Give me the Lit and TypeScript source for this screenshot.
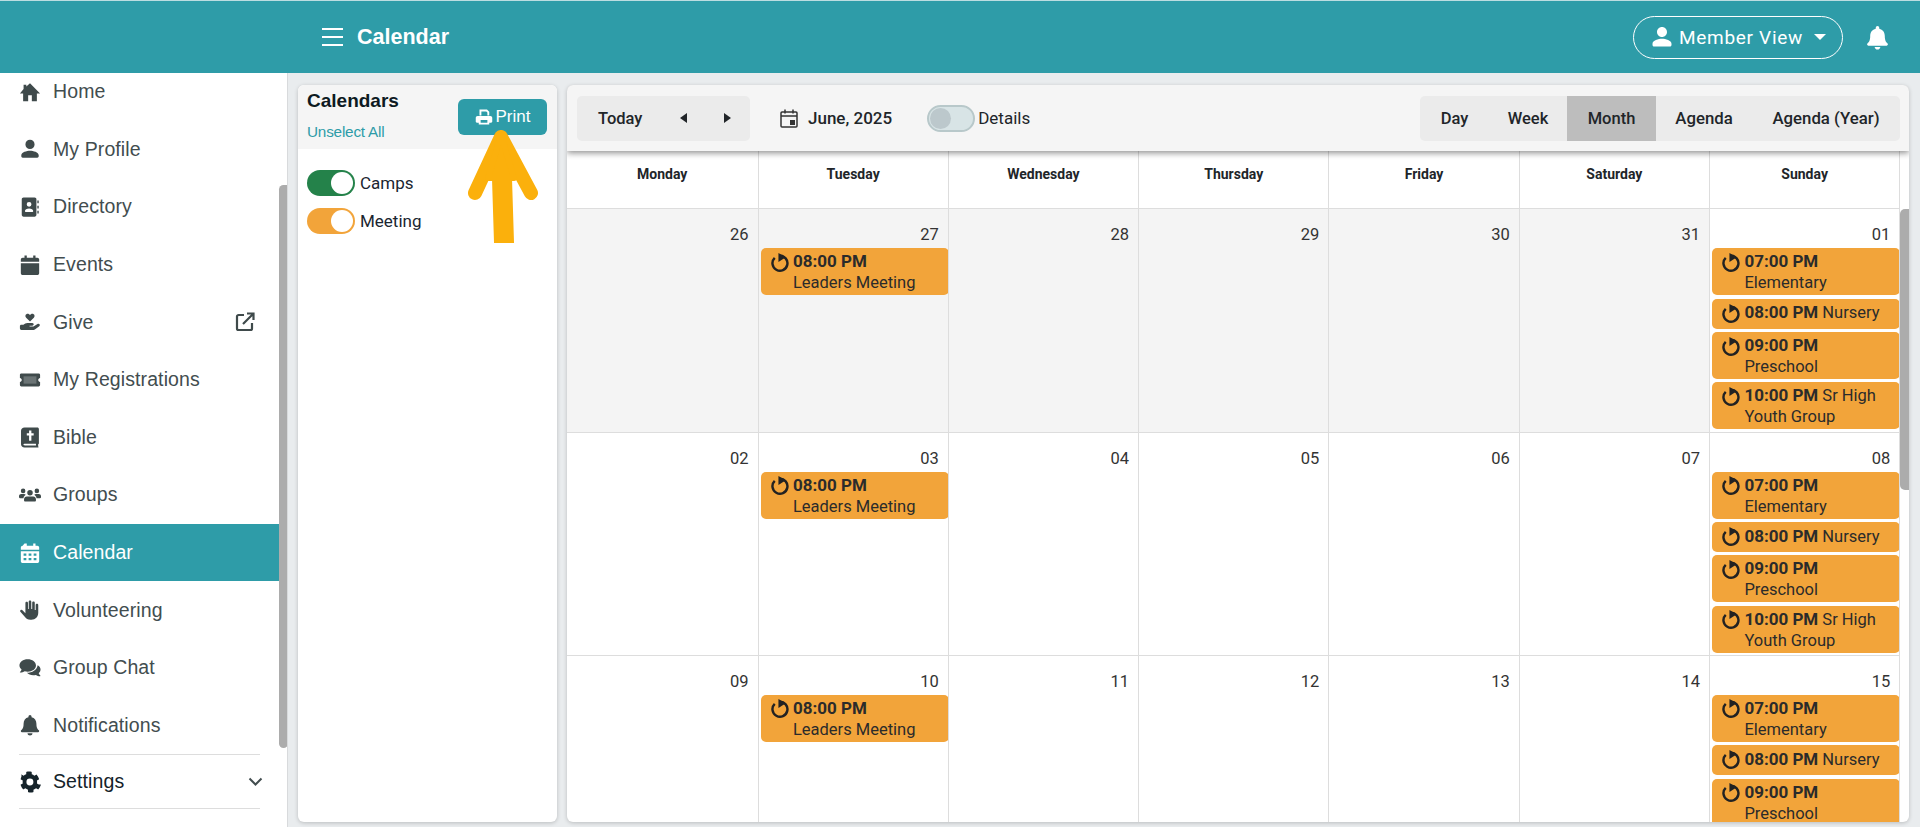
import { LitElement, html, css, svg } from "lit";
import { customElement } from "lit/decorators.js";

const ic = (vb: string, d: string, cls = "ni") => html`<svg class=${cls} viewBox=${vb} fill="currentColor">${svg`<path d=${d}></path>`}</svg>`;

const I: Record<string, any> = {
  home: ic("0 0 24 24", "M10 22v-6.500h4V22h5.500v-8.500H23L12 2.500 8 6V4H5v4.700L1 13.500h3.500V22z"),
  user: ic("0 0 24 24", "M12 12c2.800 0 5-2.200 5-5s-2.200-5-5-5-5 2.200-5 5 2.200 5 5 5zm0 1.800c-3.500 0-9.500 1.600-9.500 5v1.200c0 .8.700 1.500 1.500 1.500h16c.8 0 1.500-.7 1.500-1.500v-1.200c0-3.400-6-5-9.500-5z"),
  dir: ic("0 0 24 24", "M5 1.500h12c1.300 0 2 .9 2 2v17c0 1.200-.8 2-2 2H5c-1.200 0-2-.8-2-2v-17c0-1.200.8-2 2-2zm6 5a2.600 2.600 0 100 5.200A2.600 2.600 0 0011 6.500zm-4.500 9.800c0 .7.500 1.200 1 1.200h7c.6 0 1-.5 1-1.200 0-1.800-2-2.800-4.500-2.800s-4.500 1-4.500 2.800zM20 5h1.500v3H20zM20 10.500h1.500v3H20zM20 16h1.500v3H20z"),
  events: ic("0 0 24 24", "M6 1.500h2.500V4h7V1.500H18V4h2c1 0 2 .8 2 2v2.500H2V6c0-1.200 1-2 2-2h2zM2 10h20v11c0 1.200-1 2-2 2H4c-1 0-2-.8-2-2z"),
  give: ic("0 0 24 24", "M12 11.500L7.800 7.300C6.200 5.500 7.300 3 9.500 3c1 0 2 .6 2.500 1.500C12.500 3.600 13.500 3 14.500 3c2.200 0 3.300 2.500 1.700 4.300zM1 16.500c0-.8.700-1.500 1.500-1.500h2.300l2-1.300c.7-.5 1.600-.7 2.400-.7h5.300c1 0 1.700.8 1.500 1.800-.1.700-.8 1.200-1.500 1.200h-3v1h4.300l4.400-2.900c.7-.5 1.700-.4 2.200.3.500.7.400 1.600-.3 2.100l-4.800 3.700c-.4.300-.8.400-1.300.4H2.500c-.8 0-1.500-.7-1.500-1.500z"),
  ticket: html`<svg class="ni" viewBox="0 0 24 24" fill="currentColor">${svg`<path d="M1 6.500C1 5.700 1.700 5 2.500 5h19c.8 0 1.500.7 1.500 1.500v3.200c-1.200.3-2 1.100-2 2.300s.8 2 2 2.300v3.200c0 .8-.7 1.500-1.500 1.500h-19C1.700 19 1 18.300 1 17.500v-3.200c1.200-.3 2-1.100 2-2.300s-.8-2-2-2.300z"></path><rect x="5" y="8" width="14" height="8" fill="#6b7475"></rect>`}</svg>`,
  bible: ic("0 0 24 24", "M6 1.500h14c1 0 1.700.7 1.700 1.700v15.600c0 .6-.3 1-.8 1.200v2.300h.3v1.200H6c-2.200 0-3.800-1.500-3.800-3.600V5.200C2.200 3 3.800 1.500 6 1.500zM11 5v3H8.500v2.300H11V16h2.500v-5.700H16V8h-2.500V5zM6.500 19.300c-1 0-1.700.5-1.700 1s.7 1 1.700 1h12v-2z"),
  groups: ic("0 0 24 24", "M12 6.500a3 3 0 110 6 3 3 0 010-6zM4.500 5a2.500 2.500 0 110 5 2.500 2.500 0 010-5zm15 0a2.500 2.500 0 110 5 2.500 2.500 0 010-5zM7.300 11.800C6 12.600 5.100 13.900 4.900 15.500H1c-.5 0-1-.5-1-1v-1.200C0 11.900 1.200 11 2.500 11h3c.7 0 1.300.3 1.800.8zm9.400 0c.5-.5 1.100-.8 1.800-.8h3c1.300 0 2.500.9 2.500 2.300v1.200c0 .5-.5 1-1 1h-3.900c-.2-1.600-1.100-2.900-2.400-3.700zM8.500 13.500h7c1.700 0 3 1.300 3 3V18c0 .6-.4 1-1 1h-11c-.6 0-1-.4-1-1v-1.500c0-1.700 1.300-3 3-3z"),
  cal: ic("0 0 24 24", "M6 1.500h2.500V4h7V1.500H18V4h2c1 0 2 .8 2 2v2.500H2V6c0-1.200 1-2 2-2zM2 10h20v11c0 1.200-1 2-2 2H4c-1 0-2-.8-2-2zm3 2.500v2.500h3v-2.500zm5.500 0v2.500h3v-2.500zm5.500 0v2.500h3v-2.500zM5 17.500V20h3v-2.500zm5.500 0V20h3v-2.500zm5.500 0V20h3v-2.500z"),
  hand: ic("0 0 24 24", "M12 1.500c.8 0 1.400.6 1.400 1.400V11h1V4c0-.8.6-1.400 1.400-1.400s1.400.6 1.400 1.400v8h1V6.500c0-.8.6-1.400 1.400-1.400s1.400.6 1.400 1.400V15c0 4.500-3 7.500-7.500 7.500h-1c-3 0-4.700-1.200-6.200-3.200L1.500 14c-.5-.7-.3-1.500.3-2 .7-.5 1.500-.3 2 .3L7 15.500V4.300c0-.8.600-1.400 1.400-1.400S9.800 3.500 9.800 4.300V11h.8V2.900c0-.8.600-1.400 1.400-1.400z"),
  chat: ic("0 0 24 24", "M9.500 2.500c5 0 9 3 9 6.800s-4 6.700-9 6.700c-1.200 0-2.300-.2-3.300-.5-1.300.9-3 1.500-5 1.500-.2 0-.4-.4-.2-.6.800-.8 1.500-1.800 1.800-2.900C1.200 12.400.5 10.900.5 9.300c0-3.800 4-6.800 9-6.800zm10.800 6.600c2 1 3.200 2.700 3.200 4.600 0 1.500-.7 2.800-2 3.900.3 1 1 1.900 1.800 2.700.2.200 0 .6-.2.600-1.800 0-3.400-.6-4.700-1.400-1 .3-2 .5-3 .5-2.800 0-5.200-1-6.700-2.700 5.600 0 11-2.900 11.600-8.200z"),
  bell: ic("0 0 24 24", "M12 1a1.700 1.700 0 00-1.700 1.700v.8C6.900 4.300 5 7 5 10.500c0 4.700-1.500 6-2.700 7.300-.6.700-.3 2 .9 2h17.600c1.200 0 1.500-1.300.9-2C20.500 16.500 19 15.200 19 10.500c0-3.500-1.900-6.200-5.300-7v-.8A1.700 1.700 0 0012 1zM9.300 21c0 1.400 1.200 2.500 2.700 2.500s2.700-1.100 2.700-2.500z"),
  cog: ic("0 0 24 24", "M21.600 14.800l-2-1.200c.2-1.100.2-2.200 0-3.200l2-1.200c.2-.1.300-.4.300-.6-.5-1.700-1.400-3.200-2.600-4.500-.2-.2-.4-.2-.6-.1l-2 1.200c-.8-.7-1.800-1.300-2.800-1.600V1.300c0-.2-.2-.5-.4-.5-1.700-.4-3.500-.4-5.200 0-.2 0-.4.300-.4.500v2.300c-1 .3-2 .9-2.800 1.600l-2-1.200c-.2-.1-.5-.1-.6.100C3.200 5.400 2.300 6.900 1.800 8.600c-.1.200 0 .5.300.6l2 1.200c-.2 1-.2 2.100 0 3.200l-2 1.200c-.3.100-.4.400-.3.600.5 1.700 1.400 3.200 2.600 4.500.1.200.4.200.6.100l2-1.200c.8.700 1.800 1.300 2.800 1.600v2.300c0 .2.200.5.400.5 1.700.4 3.500.4 5.200 0 .2 0 .4-.3.400-.5v-2.300c1-.3 2-.9 2.800-1.600l2 1.200c.2.100.5.100.6-.1 1.200-1.300 2.100-2.800 2.600-4.500.1-.2 0-.5-.2-.6zM11.900 15.800a3.800 3.800 0 110-7.600 3.800 3.800 0 010 7.600z"),
};

const NAV = [
  ["home", "Home"], ["user", "My Profile"], ["dir", "Directory"], ["events", "Events"], ["give", "Give"],
  ["ticket", "My Registrations"], ["bible", "Bible"], ["groups", "Groups"], ["cal", "Calendar"],
  ["hand", "Volunteering"], ["chat", "Group Chat"], ["bell", "Notifications"],
];

const SUN = [
  ["07:00 PM", "Elementary", true], ["08:00 PM", "Nursery", false],
  ["09:00 PM", "Preschool", true], ["10:00 PM", "Sr High Youth Group", false],
] as [string, string, boolean][];
const LEAD = [["08:00 PM", "Leaders Meeting", true]] as [string, string, boolean][];

const WEEKS: { d: string; off?: boolean; ev?: [string, string, boolean][] }[][] = [
  [{ d: "26", off: true }, { d: "27", off: true, ev: LEAD }, { d: "28", off: true }, { d: "29", off: true }, { d: "30", off: true }, { d: "31", off: true }, { d: "01", ev: SUN }],
  [{ d: "02" }, { d: "03", ev: LEAD }, { d: "04" }, { d: "05" }, { d: "06" }, { d: "07" }, { d: "08", ev: SUN }],
  [{ d: "09" }, { d: "10", ev: LEAD }, { d: "11" }, { d: "12" }, { d: "13" }, { d: "14" }, { d: "15", ev: SUN }],
];

const repeat = html`<svg class="rp" viewBox="0 0 17 18" fill="none" stroke="currentColor" stroke-width="2.300">${svg`<path d="M8 2.600A7.100 7.100 0 1 1 3.500 4.600"></path><path d="M7 0l7 4-7 4.500z" fill="currentColor" stroke="none"></path>`}</svg>`;

@customElement("app-root")
export class AppRoot extends LitElement {
  static styles = css`
    :host { display: block; height: 827px; overflow: hidden; background: #e9ecee; font-family: Roboto, "Liberation Sans", sans-serif; color: #212529; position: relative; }
    .top { height: 72px; border-top: 1px solid #bcdde1; background: #2e9ca8; display: flex; align-items: center; color: #fff; padding: 0 30px 0 322px; }
    .burger { width: 21px; height: 18px; display: flex; flex-direction: column; justify-content: space-between; margin-right: 14px; }
    .burger i { display: block; height: 2px; background: #fff; }
    .title { font: 700 21.500px "Liberation Sans", Arial, sans-serif; flex: 1; }
    .pill { width: 210px; height: 43px; box-sizing: border-box; border: 1px solid #fff; border-radius: 22px; display: flex; align-items: center; padding-left: 16px; font-size: 19px; letter-spacing: .7px; margin-right: 22px; }
    .pill svg { width: 24px; height: 24px; margin-right: 5px; }
    .pill .caret { width: 0; height: 0; border: 6px solid transparent; border-top: 6px solid #fff; border-bottom: 0; margin-left: 11px; }
    .bell { width: 25px; height: 25px; }
    .main { display: flex; height: 754px; }
    .side { width: 287px; flex: none; background: #fff; position: relative; overflow: hidden; border-right: 1px solid #d8dadc; }
    .nav { margin-top: -10px; }
    .row { height: 57.600px; display: flex; align-items: center; padding-left: 19px; font-family: "Liberation Sans", Arial, sans-serif; font-size: 19.500px; letter-spacing: .1px; color: #424d4f; width: 279px; box-sizing: border-box; }
    .row .ni { width: 22px; height: 22px; margin-right: 12px; flex: none; color: #3f4a4b; }
    .row.on { background: #2e9ca8; color: #fff; }
    .row.on .ni { color: #fff; }
    .ext { width: 20px; height: 20px; margin-left: auto; margin-right: 24px; }
    .divs { margin: 0 19px; width: 241px; border-top: 1px solid #ddd; border-bottom: 1px solid #ddd; height: 55px; display: flex; align-items: center; font-family: "Liberation Sans", Arial, sans-serif; font-size: 19.500px; letter-spacing: .1px; color: #15232a; box-sizing: border-box; }
    .divs .ni { width: 22px; height: 22px; margin-right: 12px; color: #15232a; }
    .chev { width: 15px; height: 10px; margin-left: auto; margin-right: -3px; color: #424d4f; }
    .thumb { position: absolute; left: 279px; top: 112px; width: 9px; height: 563px; background: #acacac; border-radius: 5px 0 5px 5px; }
    .panel { width: 259px; flex: none; margin: 12px 10px 5px 10px; background: #fff; border-radius: 6px; box-shadow: 0 1px 4px rgba(0,0,0,.2); overflow: hidden; }
    .ph { height: 64px; background: #f5f5f5; display: flex; justify-content: space-between; padding: 0 10px 0 9px; }
    .ph b { display: block; font: 700 19px/20px "Liberation Sans", Arial, sans-serif; color: #0d1a22; margin-top: 6px; }
    .ph a { display: block; font-size: 15.300px; color: #2e9ca8; margin-top: 12px; font-family: "Liberation Sans", sans-serif; letter-spacing: -.2px; }
    .print { width: 89px; height: 36px; margin-top: 14px; background: #2e9ca8; color: #fff; border-radius: 6px; display: flex; align-items: center; justify-content: center; font: 17px "Liberation Sans", sans-serif; gap: 3px; }
    .print svg { width: 18px; height: 18px; }
    .tgs { padding: 21px 0 0 9px; display: flex; flex-direction: column; gap: 12px; }
    .tg { display: flex; align-items: center; gap: 5px; font-size: 17px; color: #1a2530; height: 26px; }
    .sw { width: 48px; height: 26px; border-radius: 13px; box-sizing: border-box; display: flex; justify-content: flex-end; padding: 2px; }
    .sw i { display: block; width: 22px; height: 22px; border-radius: 50%; background: #fff; }
    .sw.g { background: #24824a; } .sw.o { background: #f2a43a; }
    .cal { width: 1342px; flex: none; margin: 12px 0 5px 0; background: #fff; border-radius: 6px; box-shadow: 0 1px 4px rgba(0,0,0,.2); position: relative; overflow: hidden; display: flex; flex-direction: column; }
    .tb { height: 66px; flex: none; background: #f5f5f5; box-shadow: 0 2px 6px rgba(0,0,0,.45); display: flex; align-items: center; padding: 0 9px 0 10px; font-size: 16.500px; position: relative; z-index: 2; border-radius: 6px 6px 0 0; }
    .grp { height: 45px; background: #ebebeb; border-radius: 5px; display: flex; align-items: center; font-weight: 500; color: #212529; }
    .today { width: 173px; flex: none; }
    .today span { margin-left: 21px; }
    .tri { width: 0; height: 0; border: 5px solid transparent; }
    .tri.l { border-right: 7px solid #212529; border-left: 0; margin-left: 38px; }
    .tri.r { border-left: 7px solid #212529; border-right: 0; margin-left: 37px; }
    .date { display: flex; align-items: center; margin-left: 30px; font-weight: 500; font-size: 17px; }
    .date svg { width: 18px; height: 19px; margin-right: 10px; }
    .det { display: flex; align-items: center; margin-left: 35px; flex: 1; font-size: 17px; }
    .det .sw2 { width: 48px; height: 27px; box-sizing: border-box; background: #d8e4e6; border: 2px solid #b8c8ca; border-radius: 14px; padding: 1px; margin-right: 3px; }
    .det .sw2 i { display: block; width: 21px; height: 21px; border-radius: 50%; background: #bcc8cc; }
    .views { overflow: hidden; flex: none; }
    .views span { height: 100%; display: flex; align-items: center; justify-content: center; }
    .views .on { background: #bdbdbd; }
    .v1 { width: 69px; } .v2 { width: 78px; } .v3 { width: 89px; } .v4 { width: 96px; font-size: 16.800px; } .v5 { width: 148px; font-size: 16.800px; }
    .wk { display: grid; grid-template-columns: 191.500px repeat(6, 190.300px); }
    .hd div { height: 58.400px; box-sizing: border-box; border-right: 1px solid #ddd; border-bottom: 1px solid #ddd; text-align: center; font-size: 14px; font-weight: 700; padding-top: 15px; line-height: 16px; color: #212529; }
    .wk .c { height: 223.300px; box-sizing: border-box; border-right: 1px solid #ddd; border-bottom: 1px solid #ddd; padding-left: 2.400px; overflow: hidden; }
    .c.off { background: #f4f4f4; }
    .num { font-size: 16.500px; height: 39px; line-height: 18px; padding: 17px 9px 0 0; box-sizing: border-box; text-align: right; color: #333; }
    .evs { display: flex; flex-direction: column; gap: 3.330px; margin-right: -1px; }
    .ev { background: #f2a43a; border-radius: 5px; min-height: 30px; box-sizing: border-box; padding: 3px 4px 2px 10px; display: flex; font-size: 16.500px; line-height: 21px; color: #2b2b2b; align-items: flex-start; }
    .ev.one { padding-top: 3.500px; }
    .ev b { font-size: 17px; font-weight: 700; }
    .rp { width: 18px; height: 19px; flex: none; margin: 1.500px 4px 0 0; color: #222; }
    .ev .t { min-width: 0; }
    .ev .t .nl { display: block; }
    .cthumb { position: absolute; right: 0; top: 124px; width: 9px; height: 281px; background: #acacac; border-radius: 5px 0 0 5px; z-index: 1; }
    .arrow { position: absolute; left: 0; top: 0; width: 600px; height: 260px; pointer-events: none; z-index: 5; }
  `;

  render() {
    return html`
      <div class="top">
        <div class="burger"><i></i><i></i><i></i></div>
        <div class="title">Calendar</div>
        <div class="pill">${I.user}<span>Member View</span><span class="caret"></span></div>
        ${ic("0 0 24 24", "M12 1a1.700 1.700 0 00-1.700 1.700v.8C6.900 4.300 5 7 5 10.500c0 4.700-1.500 6-2.700 7.300-.6.700-.3 2 .9 2h17.600c1.200 0 1.500-1.300.9-2C20.500 16.500 19 15.200 19 10.500c0-3.500-1.900-6.200-5.300-7v-.8A1.700 1.700 0 0012 1zM9.300 21c0 1.400 1.200 2.500 2.700 2.500s2.700-1.100 2.700-2.500z", "bell")}
      </div>
      <div class="main">
        <div class="side">
          <div class="nav">
            ${NAV.map(([k, t]) => html`<div class="row ${t === "Calendar" ? "on" : ""}">${I[k]}<span>${t}</span>${t === "Give" ? html`<svg class="ext" viewBox="0 0 20 20" fill="none" stroke="#3f4a4b" stroke-width="2.200">${svg`<path d="M9 3H3.500C2.700 3 2 3.700 2 4.500v12c0 .8.7 1.500 1.500 1.500h12c.8 0 1.500-.7 1.500-1.500V11"></path><path d="M8 12L18 2M12 1.500h6.500V8"></path>`}</svg>` : ""}</div>`)}
          </div>
          <div class="divs">${I.cog}<span>Settings</span><svg class="chev" viewBox="0 0 15 10" fill="none" stroke="currentColor" stroke-width="2">${svg`<path d="M1.500 1.500l6 6 6-6"></path>`}</svg></div>
          <div class="thumb"></div>
        </div>
        <div class="panel">
          <div class="ph">
            <div><b>Calendars</b><a>Unselect All</a></div>
            <div class="print"><svg viewBox="0 0 24 24" fill="currentColor">${svg`<path d="M6 2h10l3 3v5H16.500V6L15 4.500H8.500V10H6zM3.500 10.500h17c1.400 0 2.500 1.100 2.500 2.500v5c0 .8-.7 1.500-1.500 1.500H19V22H5v-2.500H2.500C1.700 19.500 1 18.800 1 18v-5c0-1.400 1.100-2.500 2.500-2.500zM7.500 16v3.500h9V16z"></path>`}</svg>Print</div>
          </div>
          <div class="tgs">
            <div class="tg"><span class="sw g"><i></i></span>Camps</div>
            <div class="tg"><span class="sw o"><i></i></span>Meeting</div>
          </div>
        </div>
        <div class="cal">
          <div class="tb">
            <div class="grp today"><span>Today</span><i class="tri l"></i><i class="tri r"></i></div>
            <div class="date"><svg viewBox="0 0 18 19" fill="none" stroke="#333" stroke-width="1.500">${svg`<rect x="1" y="3" width="16" height="15" rx="1"></rect><path d="M1 7h16M5 .5v4M13 .5v4"></path><rect x="10" y="11" width="5" height="5" fill="#333" stroke="none"></rect>`}</svg>June, 2025</div>
            <div class="det"><span class="sw2"><i></i></span>Details</div>
            <div class="grp views">
              <span class="v1">Day</span><span class="v2">Week</span><span class="v3 on">Month</span><span class="v4">Agenda</span><span class="v5">Agenda (Year)</span>
            </div>
          </div>
          <div class="wk hd">${["Monday", "Tuesday", "Wednesday", "Thursday", "Friday", "Saturday", "Sunday"].map((d) => html`<div>${d}</div>`)}</div>
          ${WEEKS.map((w) => html`<div class="wk">${w.map((c) => html`<div class="c ${c.off ? "off" : ""}"><div class="num">${c.d}</div>${c.ev ? html`<div class="evs">${c.ev.map(([t, n, nl]) => html`<div class="ev ${nl || n.length > 12 ? "" : "one"}">${repeat}<div class="t"><b>${t}</b> ${nl ? html`<span class="nl">${n}</span>` : n}</div></div>`)}</div>` : ""}</div>`)}</div>`)}
          <div class="cthumb"></div>
        </div>
      </div>
      <svg class="arrow" viewBox="0 0 600 260">${svg`<path d="M501 137L475 193M501 137L531 193" stroke="#fbb00c" stroke-width="14" stroke-linecap="round" fill="none"></path><path d="M501 133L492 178L494 243H514L512 178Z" fill="#fbb00c"></path><path d="M501 135L488 178H514Z" fill="#fbb00c" stroke="#fbb00c" stroke-width="6" stroke-linejoin="round"></path>`}</svg>
    `;
  }
}
